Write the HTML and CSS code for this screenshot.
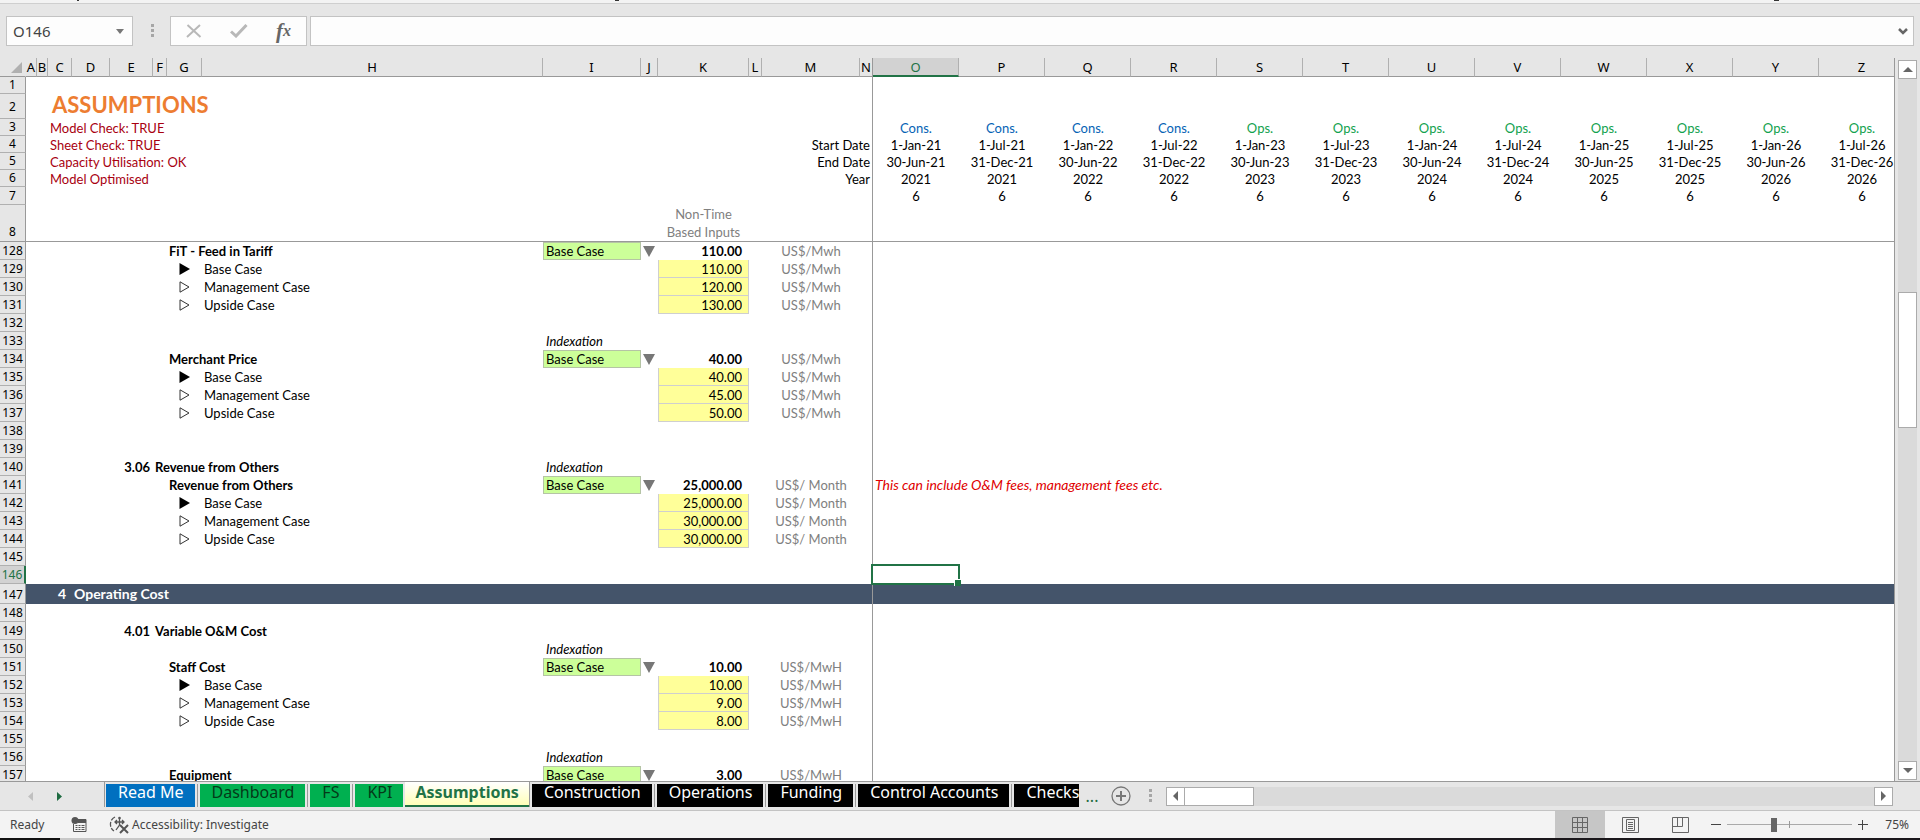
FILE: index.html
```html
<!DOCTYPE html>
<html lang="en">
<head>
    <meta charset="UTF-8">
    <meta name="viewport" content="width=device-width, initial-scale=1.0">
    <title>Assumptions</title>
    <link rel="stylesheet" href="styles.css">
</head>
<body>
    <div class="ribbon-edge">
        <svg width="100%" height="3" viewBox="0 0 1920 3" preserveAspectRatio="none" aria-hidden="true">
            <path d="M77 0h2v1h-2zM615 0h4v1h-4zM1774 0h5v1h-5z" fill="#333"/>
        </svg>
    </div>

    <!-- Name box and formula bar -->
    <div class="formula-bar">
        <div class="name-box">
            <input type="text" value="O146" aria-label="Name box">
            <button type="button" aria-label="Show names">
                <svg width="8" height="5" viewBox="0 0 8 5"><path d="M0 0h8L4 5z" fill="#777"/></svg>
            </button>
        </div>
        <svg class="dots" width="4" height="14" viewBox="0 0 4 14"><path d="M0 0h3v3H0zM0 5h3v3H0zM0 10h3v3H0z" fill="#a6a6a6"/></svg>
        <div class="formula-buttons">
            <button type="button" aria-label="Cancel">
                <svg width="16" height="14" viewBox="0 0 16 14"><path d="M1.500 1L14.500 13M14 1L1 13" stroke="#b8b8b8" stroke-width="2" fill="none"/></svg>
            </button>
            <button type="button" aria-label="Enter">
                <svg width="18" height="14" viewBox="0 0 18 14"><path d="M1 7.500L6 12L16.500 1" stroke="#b8b8b8" stroke-width="3" fill="none"/></svg>
            </button>
            <button type="button" class="fx" aria-label="Insert function"><span class="fx-f">f</span><span class="fx-x">x</span></button>
        </div>
        <div class="formula-input">
            <input type="text" aria-label="Formula">
            <button type="button" aria-label="Expand formula bar">
                <svg width="10" height="7" viewBox="0 0 10 7"><path d="M1 1L5 5L9 1" stroke="#666" stroke-width="2.500" fill="none"/></svg>
            </button>
        </div>
    </div>

    <div class="sheet-area">
        <div class="sheet">
            <table class="grid">
                <colgroup id="cols"></colgroup>
                <thead id="head"></thead>
                <tbody id="body"></tbody>
            </table>
        </div>
        <div class="vscroll">
            <button type="button" aria-label="Scroll up">
                <svg width="10" height="5" viewBox="0 0 10 5"><path d="M0 5h10L5 0z" fill="#666"/></svg>
            </button>
            <div class="vtrack"><div class="vthumb"></div></div>
            <button type="button" aria-label="Scroll down">
                <svg width="10" height="5" viewBox="0 0 10 5"><path d="M0 0h10L5 5z" fill="#666"/></svg>
            </button>
        </div>
    </div>

    <!-- Sheet tabs and horizontal scroll -->
    <div class="tab-bar">
        <div class="tab-nav">
            <button type="button" aria-label="Previous sheet" disabled>
                <svg width="5" height="9" viewBox="0 0 5 9"><path d="M5 0v9L0 4.500z" fill="#c0c0c0"/></svg>
            </button>
            <button type="button" aria-label="Next sheet">
                <svg width="5" height="9" viewBox="0 0 5 9"><path d="M0 0v9L5 4.500z" fill="#1e6b41"/></svg>
            </button>
        </div>
        <nav class="tabs">
            <a href="#" class="tab blue">Read Me</a>
            <a href="#" class="tab green">Dashboard</a>
            <a href="#" class="tab green">FS</a>
            <a href="#" class="tab green">KPI</a>
            <a href="#" class="tab active">Assumptions</a>
            <a href="#" class="tab black">Construction</a>
            <a href="#" class="tab black">Operations</a>
            <a href="#" class="tab black">Funding</a>
            <a href="#" class="tab black">Control Accounts</a>
            <a href="#" class="tab black">Checks</a>
        </nav>
        <button type="button" class="more-tabs" aria-label="More sheets">...</button>
        <button type="button" class="add-tab" aria-label="New sheet">
            <svg width="22" height="22" viewBox="0 0 22 22"><circle cx="11" cy="11" r="9" fill="none" stroke="#777" stroke-width="1.300"/><path d="M11 6v10M6 11h10" stroke="#777" stroke-width="2"/></svg>
        </button>
        <svg class="dots" width="4" height="14" viewBox="0 0 4 14"><path d="M0 0h3v3H0zM0 5h3v3H0zM0 10h3v3H0z" fill="#a6a6a6"/></svg>
        <div class="hscroll">
            <button type="button" aria-label="Scroll left">
                <svg width="5" height="10" viewBox="0 0 5 10"><path d="M5 0v10L0 5z" fill="#666"/></svg>
            </button>
            <div class="htrack"><div class="hthumb"></div></div>
            <button type="button" aria-label="Scroll right">
                <svg width="5" height="10" viewBox="0 0 5 10"><path d="M0 0v10L5 5z" fill="#666"/></svg>
            </button>
        </div>
    </div>

    <div class="status-bar">
        <span class="ready">Ready</span>
        <button type="button" class="macro" aria-label="Record macro">
            <svg width="16" height="16" viewBox="0 0 16 16"><path d="M7 2.500h8v12H2.500V7" fill="none" stroke="#555"/><path d="M7 3h8v3H7z" fill="#555"/><path d="M4.500 8.500h2m1 0h2m1 0h3m-9 2h2m1 0h2m1 0h3m-9 2h2m1 0h2m1 0h3" stroke="#555"/><circle cx="4" cy="3.500" r="3.500" fill="#555"/></svg>
        </button>
        <button type="button" class="access">
            <svg width="20" height="18" viewBox="0 0 20 18"><path d="M6 1C0 4 0 12 5 15" fill="none" stroke="#555" stroke-width="1.300" stroke-dasharray="5 1.500"/><path d="M6 6h9M8 4L6 6l2 2M13 4l2 2l-2 2M10.500 2v7L7 14" fill="none" stroke="#555" stroke-width="1.300"/><circle cx="10.500" cy="2" r="1.300" fill="#555"/><path d="M11 9l8 8M19 9l-8 8" stroke="#555" stroke-width="2"/></svg>
            <span>Accessibility: Investigate</span>
        </button>
        <div class="views">
            <button type="button" class="current" aria-label="Normal view">
                <svg width="16" height="16" viewBox="0 0 16 16"><path d="M.5.5h15v15H.5zM5.500 0v16M10.500 0v16M0 5.500h16M0 10.500h16" fill="none" stroke="#666"/></svg>
            </button>
            <button type="button" aria-label="Page layout view">
                <svg width="17" height="16" viewBox="0 0 17 16"><path d="M.5.5h16v15H.5zM4.500 2.500h8v11h-8zM6 5.500h5M6 7.500h5M6 9.500h5M6 11.500h5" fill="none" stroke="#666"/></svg>
            </button>
            <button type="button" aria-label="Page break view">
                <svg width="17" height="16" viewBox="0 0 17 16"><path d="M.5.5h16v15H.5zM.5 9.500h10v-9M5.500.5v9" fill="none" stroke="#666"/></svg>
            </button>
        </div>
        <div class="zoom">
            <button type="button" aria-label="Zoom out"><svg width="10" height="10" viewBox="0 0 10 10"><path d="M0 4.500h10" stroke="#444"/></svg></button>
            <input type="range" min="10" max="140" value="58" aria-label="Zoom">
            <button type="button" aria-label="Zoom in"><svg width="10" height="10" viewBox="0 0 10 10"><path d="M0 4.500h10M4.500 0v10" stroke="#444"/></svg></button>
        </div>
        <span class="percent">75%</span>
    </div>
    <div class="taskbar-edge"><div class="edge-dark"></div><div class="edge-light"></div><div class="edge-rest"></div></div>

    <script src="script.js"></script>
</body>
</html>
```
FILE: styles.css
```css
* {
    box-sizing: border-box;
}
body {
    display: flex;
    flex-direction: column;
    height: 100vh;
    margin: 0;
    overflow: hidden;
    background: #e6e6e6;
    color: #000;
    font-family: "Noto Sans", sans-serif;
    font-size: 12px;
}
button, input, select {
    font: inherit;
    color: inherit;
    margin: 0;
    padding: 0;
    border: 0;
    background: none;
    border-radius: 0;
}
button {
    display: flex;
    align-items: center;
    justify-content: center;
}
svg {
    display: block;
    flex: none;
}
.ribbon-edge {
    height: 4px;
    flex: none;
    background: #f3f3f3;
    border-bottom: 1px solid #cfcfcf;
}

/* formula bar */
.formula-bar {
    display: flex;
    align-items: center;
    flex: none;
    height: 54px;
    padding: 0 6px;
}
.name-box, .formula-buttons, .formula-input {
    display: flex;
    height: 30px;
    background: #fdfdfd;
    border: 1px solid #c3c3c3;
}
.name-box {
    width: 127px;
    margin-right: 18px;
}
.name-box input {
    flex: 1;
    min-width: 0;
    padding-left: 6px;
    font-size: 15px;
    color: #444;
}
.name-box button {
    width: 24px;
}
.formula-buttons {
    width: 137px;
    margin-left: 15px;
    margin-right: 3px;
}
.formula-buttons button {
    flex: 1;
}
.fx {
    font-family: "Liberation Serif", serif;
    font-style: italic;
    font-weight: bold;
    color: #666;
}
.fx-f {
    font-size: 21px;
}
.fx-x {
    font-size: 16px;
}
.formula-input {
    flex: 1;
}
.formula-input input {
    flex: 1;
}
.formula-input button {
    width: 20px;
}

/* grid */
.sheet-area {
    display: flex;
    flex: 1;
    min-height: 0;
}
.sheet {
    flex: 1;
    min-width: 0;
    overflow: hidden;
    background: linear-gradient(#e6e6e6 19px, #fff 19px);
    border-right: 1px solid #999;
}
.grid {
    table-layout: fixed;
    width: 1px;
    border-collapse: separate;
    border-spacing: 0;
    font-family: Lato, sans-serif;
    font-size: 13px;
}
.grid th, .grid td {
    padding: 0;
    height: 18px;
    line-height: 16px;
    white-space: nowrap;
}
.grid td {
    text-align: left;
}
.grid thead th {
    height: 19px;
    background: #e6e6e6;
    border-right: 1px solid #b0b0b0;
    border-bottom: 1px solid #999;
    font-family: "Noto Sans", sans-serif;
    font-weight: normal;
}
.grid tbody th {
    background: #e6e6e6;
    border-right: 1px solid #999;
    border-bottom: 1px solid #b0b0b0;
    font-family: "Noto Sans", sans-serif;
    font-size: 12px;
    font-weight: normal;
    vertical-align: bottom;
}
.grid thead .corner {
    padding: 0 3px 3px 0;
    vertical-align: bottom;
    border-right-color: #e6e6e6;
}
.corner svg {
    margin-left: auto;
}
.grid thead .current-col {
    background: #d2d2d2;
    color: #217346;
    border-bottom: 2px solid #217346;
}
.grid tbody .current-row {
    background: #d2d2d2;
    color: #217346;
    border-right: 2px solid #217346;
}
.grid .top th, .grid .top td {
    height: 17px;
    line-height: 16px;
}
.grid .title th, .grid .title td {
    height: 25px;
    line-height: 22px;
}
.grid .title td {
    vertical-align: top;
}
.grid .months th, .grid .months td {
    height: 18px;
}
.grid .inputs-head th, .grid .inputs-head td {
    height: 36px;
    line-height: 18px;
    vertical-align: bottom;
    border-bottom: 1px solid #999;
}
.grid .band th, .grid .band td {
    height: 20px;
}
.grid .band td {
    background: #44546a;
    color: #fff;
    font-weight: bold;
    font-size: 14px;
}
.grid .freeze {
    border-right: 1px solid #999;
}
.grid .heading {
    padding-left: 4px;
    font-size: 22px;
    font-weight: bold;
    color: #ed7d31;
}
.grid .check {
    padding-left: 2px;
    color: #a80010;
}
.grid .bold {
    padding-left: 2px;
    font-weight: bold;
}
.grid .num {
    padding-right: 3px;
    text-align: right;
    font-weight: bold;
}
.grid .band .num {
    padding-right: 6px;
}
.grid .label {
    padding-left: 2px;
}
.grid .italic {
    padding-left: 3px;
    font-style: italic;
}
.grid .note {
    padding-left: 2px;
    font-size: 14px;
    font-style: italic;
    color: #e00000;
}
.grid .center {
    text-align: center;
}
.grid .right {
    padding-right: 2px;
    text-align: right;
}
.grid .cons {
    text-align: center;
    color: #0563b5;
}
.grid .ops {
    text-align: center;
    color: #12a24f;
}
.grid .unit, .grid .grey {
    text-align: center;
    color: #808080;
}
.marker svg {
    margin: 0 auto;
}
.arrow svg {
    margin-left: 2px;
}
.grid .total {
    padding-right: 7px;
    text-align: right;
    font-weight: bold;
}
.pick select {
    display: block;
    appearance: none;
    width: 100%;
    height: 18px;
    padding-left: 2px;
    background: #ccff99;
    border: 1px solid #b5c4a5;
}
.entry input {
    display: block;
    width: 100%;
    height: 18px;
    padding-right: 6px;
    text-align: right;
    background: #ffff99;
    border: 1px solid #cfcfcf;
    border-top: 0;
}
.selected {
    position: relative;
}
.selection {
    position: absolute;
    inset: -2px -1px -1px -2px;
    border: 2px solid #217346;
}
.selection::after {
    content: "";
    position: absolute;
    right: -3px;
    bottom: -3px;
    width: 6px;
    height: 6px;
    background: #217346;
    border-top: 1px solid #fff;
    border-left: 1px solid #fff;
}

/* scroll bars */
.vscroll {
    display: flex;
    flex-direction: column;
    width: 19px;
    margin: 2px 3px 1px 3px;
}
.vscroll button, .hscroll button {
    flex: none;
    width: 19px;
    height: 19px;
    background: #fff;
    border: 1px solid #ababab;
}
.vtrack {
    flex: 1;
    background: #dadada;
}
.vthumb {
    height: 20%;
    margin-top: 213px;
    background: #fff;
    border: 1px solid #ababab;
}
.hscroll {
    display: flex;
    flex: 1;
    margin-right: 27px;
}
.htrack {
    flex: 1;
    background: #dadada;
}
.hthumb {
    width: 10%;
    height: 19px;
    background: #fff;
    border: 1px solid #ababab;
    border-left: 0;
}

/* tabs */
.tab-bar {
    display: flex;
    align-items: center;
    flex: none;
    height: 30px;
    border-top: 1px solid #999;
    border-bottom: 1px solid #c3c3c3;
}
.tab-nav {
    display: flex;
    gap: 24px;
    width: 104px;
    padding-left: 28px;
}
.tabs {
    display: flex;
    align-self: flex-start;
    width: 975px;
    overflow: hidden;
    border-left: 1px solid #999;
}
.tab {
    flex: none;
    height: 23px;
    margin: 2px 4px 0 1px;
    padding: 0 11px 0 12px;
    font-size: 16px;
    line-height: 16px;
    text-decoration: none;
    box-shadow: 2px 0 0 #e6e6e6, 3px 0 0 #999;
}
.blue {
    background: #0070c0;
    color: #fff;
}
.green {
    background: #00b050;
    color: #043a18;
}
.black {
    background: #000;
    color: #fff;
}
.active {
    height: 25px;
    margin: 0 2px 0 -2px;
    padding: 2px 10px 0;
    background: linear-gradient(#fff, #ffffb8);
    border-bottom: 2px solid #217346;
    color: #217346;
    font-weight: bold;
    box-shadow: 1px 0 0 #999;
}
.more-tabs {
    width: 26px;
    font-size: 16px;
    color: #1e6b41;
}
.add-tab {
    width: 32px;
}
.tab-bar .dots {
    margin: 0 13px 0 12px;
}

/* status bar */
.status-bar {
    display: flex;
    align-items: center;
    flex: none;
    height: 27px;
    padding-left: 10px;
    background: #f3f3f3;
    color: #444;
}
.ready {
    width: 61px;
}
.macro {
    width: 16px;
}
.access {
    gap: 3px;
    margin-left: 22px;
}
.views {
    display: flex;
    align-self: stretch;
    margin-left: auto;
}
.views button {
    width: 50px;
}
.views .current {
    background: #c6c6c6;
}
.zoom {
    display: flex;
    align-items: center;
    gap: 6px;
    padding-left: 6px;
}
.zoom input {
    appearance: none;
    width: 125px;
    height: 16px;
    background: linear-gradient(#999, #999) 50% 50% / 1px 7px no-repeat, linear-gradient(#aaa, #aaa) 0 50% / 100% 1px no-repeat;
}
.zoom input::-webkit-slider-thumb {
    appearance: none;
    width: 6px;
    height: 14px;
    background: #666;
}
.percent {
    width: 52px;
    padding-right: 11px;
    text-align: right;
}
.taskbar-edge {
    display: flex;
    flex: none;
    height: 2px;
}
.edge-dark {
    width: 60px;
    background: #111;
}
.edge-light {
    width: 430px;
    background: #c8c8c8;
}
.edge-rest {
    flex: 1;
    background: #1a171b;
}
```
FILE: script.js
```js
const letters = 'ABCDEFGHIJKLMNOPQRSTUVWXYZ';
const widths = [26, 11, 11, 24, 38, 43, 14, 35, 341, 98, 17, 91, 13, 98, 13,
    86, 86, 86, 86, 86, 86, 86, 86, 86, 86, 86, 86];

const filled = '<svg width="11" height="12" viewBox="0 0 11 12"><path d="M0.500 0v12L11 6z" fill="#000"/></svg>';
const hollow = '<svg width="11" height="12" viewBox="0 0 11 12"><path d="M1 0.800v10.400L10 6z" fill="#fff" stroke="#333"/></svg>';
const down = '<svg width="12" height="11" viewBox="0 0 12 11"><path d="M0 0h12L6 11z" fill="#777"/></svg>';

document.getElementById('cols').innerHTML = widths.map(w => `<col style="width:${w}px">`).join('');

const head = document.getElementById('head');
head.innerHTML = '<tr><th class="corner"><svg width="11" height="11" viewBox="0 0 11 11"><path d="M11 0v11H0z" fill="#b0b0b0"/></svg></th>' +
    [...letters].map(l => `<th${l === 'O' ? ' class="current-col"' : l === 'N' ? ' class="freeze"' : ''}>${l}</th>`).join('') + '</tr>';

const body = document.getElementById('body');

// cells: { column letter: [class, html] }
function addRow(number, cells, rowClass) {
    let html = `<th${number === 146 ? ' class="current-row"' : ''}>${number}</th>`;
    for (const l of letters) {
        const cell = cells[l] || ['', ''];
        const cls = (cell[0] + (l === 'N' ? ' freeze' : '')).trim();
        html += `<td${cls ? ` class="${cls}"` : ''}>${cell[1]}</td>`;
    }
    const tr = document.createElement('tr');
    tr.className = rowClass || '';
    tr.innerHTML = html;
    body.appendChild(tr);
}

// Half-year periods, two per year from 2021
const periods = [...letters.slice(14)].map((l, i) => {
    const yy = 21 + Math.floor(i / 2);
    const first = i % 2 === 0;
    return {
        l,
        phase: i < 4 ? ['cons', 'Cons.'] : ['ops', 'Ops.'],
        start: ['center', (first ? '1-Jan-' : '1-Jul-') + yy],
        end: ['center', (first ? '30-Jun-' : '31-Dec-') + yy],
        year: ['center', 2000 + yy],
        months: ['center', 6]
    };
});
const timeline = key => Object.fromEntries(periods.map(p => [p.l, p[key]]));

addRow(1, {}, 'top');
addRow(2, { C: ['heading', 'ASSUMPTIONS'] }, 'title');
addRow(3, { C: ['check', 'Model Check: TRUE'], ...timeline('phase') }, 'top');
addRow(4, { C: ['check', 'Sheet Check: TRUE'], ...timeline('start') }, 'top');
addRow(5, { C: ['check', 'Capacity Utilisation: OK'], ...timeline('end') }, 'top');
addRow(6, { C: ['check', 'Model Optimised'], ...timeline('year') }, 'top');
addRow(7, timeline('months'), 'months');
addRow(8, { K: ['grey', 'Non-Time<br>Based Inputs'] }, 'inputs-head');

// Row labels run over the M and N columns
['Start Date', 'End Date', 'Year'].forEach((text, i) => {
    const tr = body.rows[3 + i];
    tr.cells[14].remove();
    tr.cells[13].colSpan = 2;
    tr.cells[13].className = 'right freeze';
    tr.cells[13].textContent = text;
});

const indexation = { I: ['italic', 'Indexation'] };

function addGroup(row, name, values, unit, extra) {
    addRow(row, {
        G: ['bold', name],
        I: ['pick', `<select aria-label="${name} case"><option>Base Case</option><option>Management Case</option><option>Upside Case</option></select>`],
        J: ['arrow', down],
        K: ['total', values[0]],
        M: ['unit', unit],
        ...extra
    });
    ['Base Case', 'Management Case', 'Upside Case'].forEach((label, i) => {
        if (i + 1 >= values.length) return;
        addRow(row + 1 + i, {
            G: ['marker', i === 0 ? filled : hollow],
            H: ['label', label],
            K: ['entry', `<input type="text" value="${values[i + 1]}" aria-label="${name} ${label}">`],
            M: ['unit', unit]
        });
    });
}

addGroup(128, 'FiT - Feed in Tariff', ['110.00', '110.00', '120.00', '130.00'], 'US$/Mwh');
addRow(132, {});
addRow(133, indexation);
addGroup(134, 'Merchant Price', ['40.00', '40.00', '45.00', '50.00'], 'US$/Mwh');
addRow(138, {});
addRow(139, {});
addRow(140, { E: ['num', '3.06'], F: ['bold', 'Revenue from Others'], ...indexation });
addGroup(141, 'Revenue from Others', ['25,000.00', '25,000.00', '30,000.00', '30,000.00'], 'US$/ Month',
    { O: ['note', 'This can include O&amp;M fees, management fees etc.'] });
addRow(145, {});
addRow(146, { O: ['selected', '<div class="selection"></div>'] });
addRow(147, { C: ['num', '4'], D: ['bold', 'Operating Cost'] }, 'band');
addRow(148, {});
addRow(149, { E: ['num', '4.01'], F: ['bold', 'Variable O&amp;M Cost'] });
addRow(150, indexation);
addGroup(151, 'Staff Cost', ['10.00', '10.00', '9.00', '8.00'], 'US$/MwH');
addRow(155, {});
addRow(156, indexation);
addGroup(157, 'Equipment', ['3.00'], 'US$/MwH');
```
